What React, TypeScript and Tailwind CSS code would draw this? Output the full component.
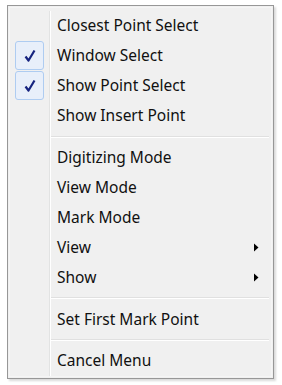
type Item =
  | { kind: "item"; label: string; checked?: boolean; submenu?: boolean }
  | { kind: "sep" };

const items: Item[] = [
  { kind: "item", label: "Closest Point Select" },
  { kind: "item", label: "Window Select", checked: true },
  { kind: "item", label: "Show Point Select", checked: true },
  { kind: "item", label: "Show Insert Point" },
  { kind: "sep" },
  { kind: "item", label: "Digitizing Mode" },
  { kind: "item", label: "View Mode" },
  { kind: "item", label: "Mark Mode" },
  { kind: "item", label: "View", submenu: true },
  { kind: "item", label: "Show", submenu: true },
  { kind: "sep" },
  { kind: "item", label: "Set First Mark Point" },
  { kind: "sep" },
  { kind: "item", label: "Cancel Menu" },
];

const Gutter = ({ children }: { children?: React.ReactNode }) => (
  <div className="flex w-[40px] shrink-0 items-center justify-center self-stretch border-r border-r-[#e2e3e3] shadow-[1px_0_0_#ffffff]">
    {children}
  </div>
);

const Check = () => (
  <div className="flex h-[29px] w-[29px] items-center justify-center rounded-[3px] border border-[#aeccf1] bg-[#e8effa]">
    <svg width="12" height="14" viewBox="0 0 12 14">
      <path d="M1.5 7.5 L4.5 11.5 L10.5 1.5" fill="none" stroke="#16237f" strokeWidth="2.2" strokeLinejoin="round" />
    </svg>
  </div>
);

export default function App() {
  return (
    <div className="h-[385px] w-[282px] bg-white pl-[7px] pt-[5px]" style={{ fontFamily: '"Noto Sans", "Open Sans", sans-serif' }}>
      <div className="h-[374px] w-[267px] border border-[#979797] bg-[#f0f0f0] p-[1px] shadow-[2px_2px_2px_rgba(0,0,0,0.15)]">
        <div className="flex h-full flex-col border border-[#f5f5f5] pt-[3px] pr-[2px]">
          {items.map((it, i) =>
            it.kind === "sep" ? (
              <div key={i} className="flex h-[12px]">
                <Gutter />
                <div className="flex flex-1 items-center pl-[1px]">
                  <div className="h-[2px] w-full border-t border-t-[#e0e0e0] border-b border-b-white" />
                </div>
              </div>
            ) : (
              <div key={i} className="flex h-[30.5px] items-stretch">
                <Gutter>{it.checked && <Check />}</Gutter>
                <div className="flex flex-1 items-center pl-[7px] pr-[10px] text-[15.5px] text-[#111111]">
                  <span className="flex-1">{it.label}</span>
                  {it.submenu && (
                    <svg width="5" height="9" viewBox="0 0 5 9">
                      <path d="M0 0.5 L4.5 4.5 L0 8.5 Z" fill="#000" />
                    </svg>
                  )}
                </div>
              </div>
            )
          )}
        </div>
      </div>
    </div>
  );
}
